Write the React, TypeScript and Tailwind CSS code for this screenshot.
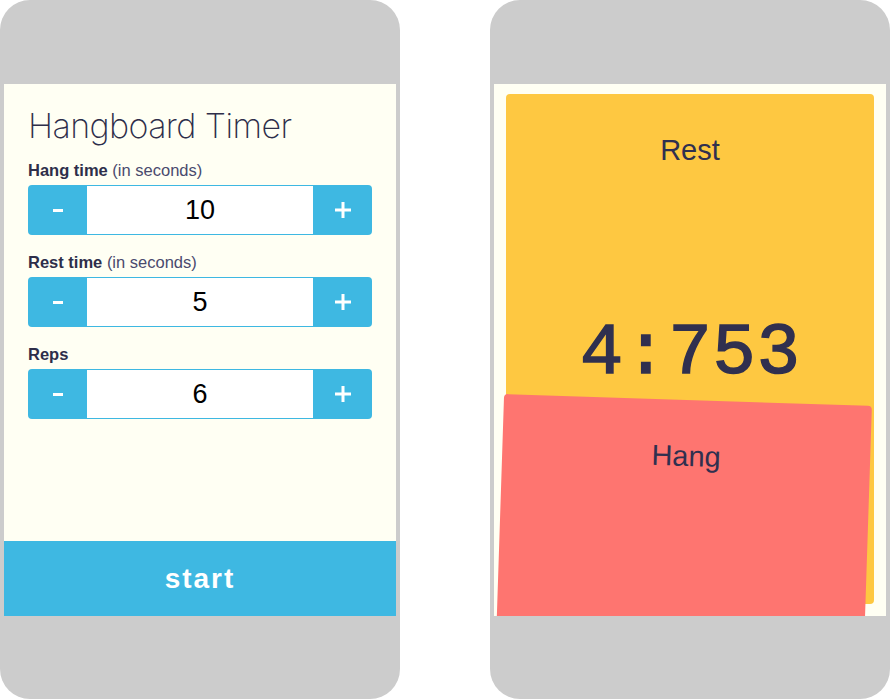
const sans = "font-['Liberation_Sans',Arial,sans-serif]";

interface StepperProps {
  label: string;
  hint?: string;
  value: number;
}

function PlusIcon() {
  return (
    <svg width="16" height="16" viewBox="0 0 16 16" fill="white">
      <rect x="0" y="6.5" width="16" height="3" />
      <rect x="6.5" y="0" width="3" height="16" />
    </svg>
  );
}

function Stepper({ label, hint, value }: StepperProps) {
  return (
    <div className="mb-[17px]">
      <div className="h-5 mb-[5px] text-[16.5px] leading-5 text-[#2e2e4a] whitespace-nowrap">
        <span className="font-bold">{label}</span>
        {hint && <span className="text-[#4a4a6e]"> {hint}</span>}
      </div>
      <div className="flex h-[50px] rounded bg-[#3eb8e2] overflow-hidden">
        <button className="w-[59px] flex items-center justify-center">
          <span className="block w-[10px] h-[3px] bg-white" />
        </button>
        <div className="flex-1 bg-white border-y border-[#3eb8e2] flex items-center justify-center text-[27px] text-black">
          {value}
        </div>
        <button className="w-[59px] flex items-center justify-center">
          <PlusIcon />
        </button>
      </div>
    </div>
  );
}

function Phone({ children }: { children: React.ReactNode }) {
  return (
    <div className="w-[400px] h-[699px] rounded-[30px] bg-[#cccccc] pt-[84px] pb-[83px] px-1 flex">
      {children}
    </div>
  );
}

export default function App() {
  return (
    <div className={`w-[890px] h-[699px] bg-white flex gap-[90px] ${sans}`}>
      {/* Settings screen */}
      <Phone>
        <div className="flex-1 bg-[#fffff3] flex flex-col">
          <div className="flex-1 px-6">
            <h1 className="mt-[21px] mb-[13px] text-[34px] leading-[42px] font-extralight text-[#2e2e4a] font-['Inter',sans-serif] tracking-[-0.6px]">
              Hangboard Timer
            </h1>
            <Stepper label="Hang time" hint="(in seconds)" value={10} />
            <Stepper label="Rest time" hint="(in seconds)" value={5} />
            <Stepper label="Reps" value={6} />
          </div>
          <button className="h-[75px] bg-[#3eb8e2] text-white text-[28px] font-bold tracking-[2px] flex items-center justify-center">
            start
          </button>
        </div>
      </Phone>

      {/* Running screen */}
      <Phone>
        <div className="flex-1 bg-[#fffff3] relative overflow-hidden pt-[10px] pb-3 px-3 flex">
          <div className="flex-1 rounded bg-[#fec841] flex flex-col items-center">
            <div className="mt-[39px] text-[29px] leading-[34px] text-[#30304f]">Rest</div>
            <div className="mt-[151px] pl-[1px] text-[72px] leading-none text-[#30304f] font-['Liberation_Mono','Courier_New',monospace] tracking-[1px] [-webkit-text-stroke:1.5px_#30304f]">
              4:753
            </div>
          </div>
          <div className="absolute left-[10px] top-[316px] w-[368px] h-[511px] origin-top rotate-[1.87deg] rounded bg-[#fe7570] flex flex-col items-center">
            <div className="mt-[39px] text-[29px] leading-[34px] text-[#30304f]">Hang</div>
          </div>
        </div>
      </Phone>
    </div>
  );
}
